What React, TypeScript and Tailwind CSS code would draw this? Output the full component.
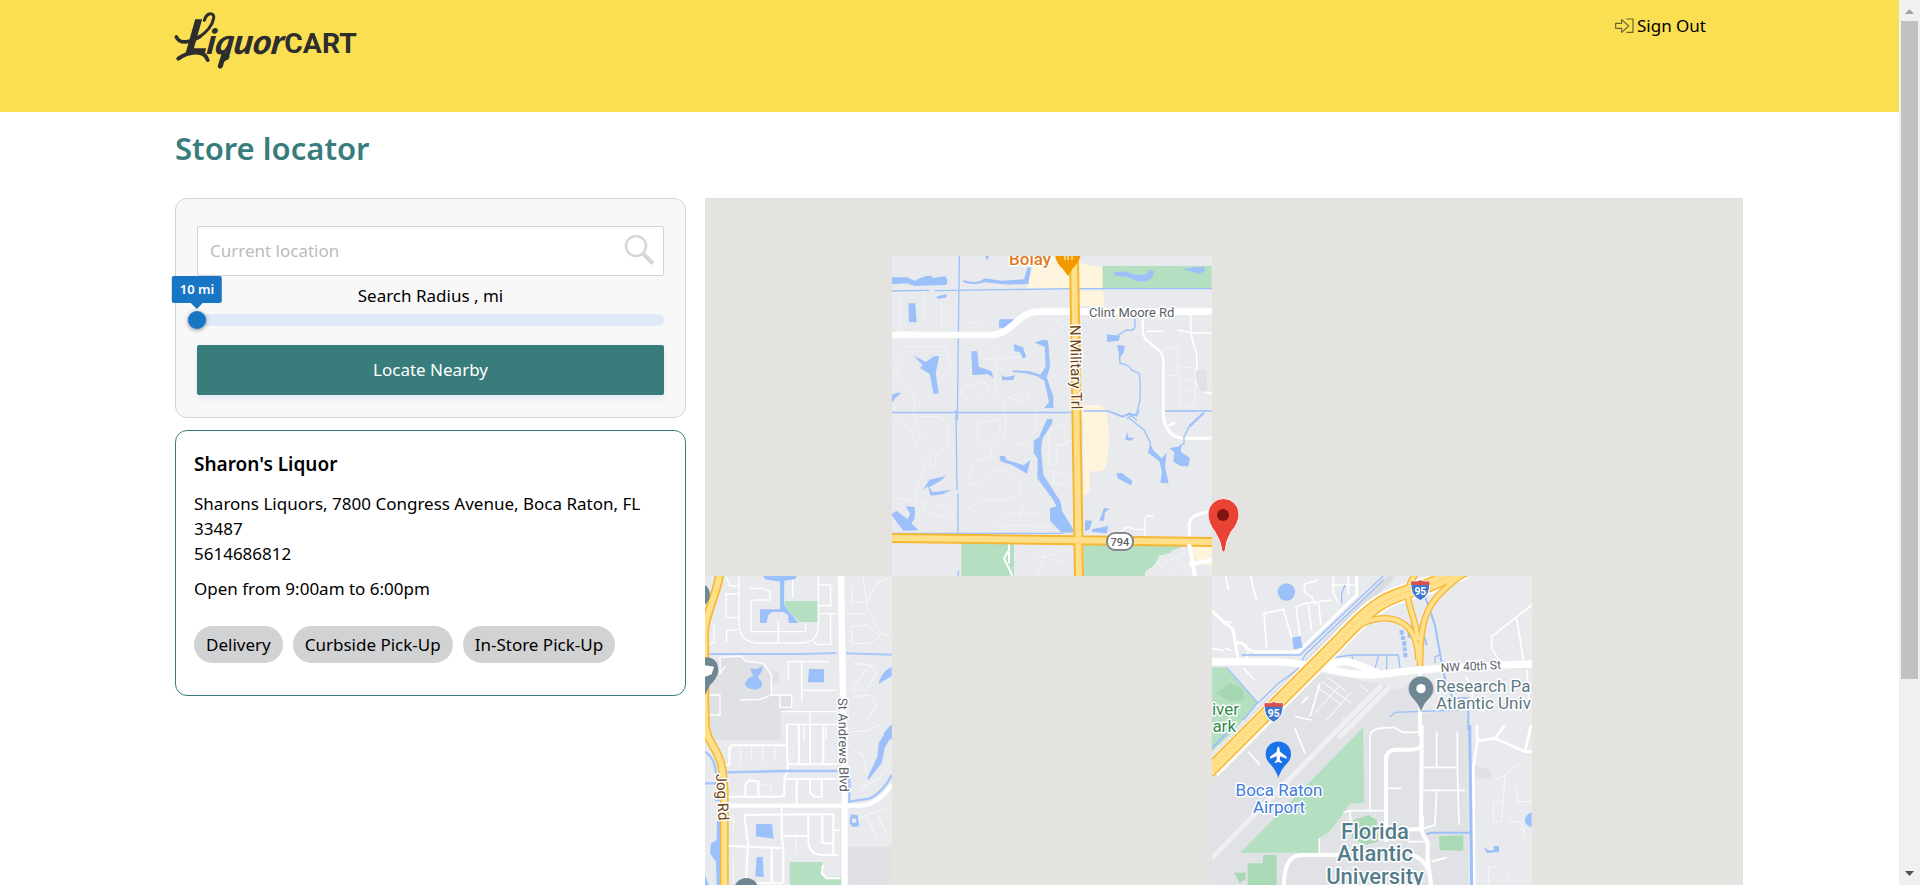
import React from "react";

const services = ["Delivery", "Curbside Pick-Up", "In-Store Pick-Up"];

function Logo() {
  return (
    <svg width="184" height="60" viewBox="0 0 552 180" role="img" aria-label="LiquorCART" className="block overflow-visible">
      <g fill="none" stroke="#2d2d2d" strokeLinecap="round" strokeLinejoin="round">
        <path d="M4 78 C14 100 45 96 76 76" strokeWidth="11" />
        <path d="M10 143 C40 122 88 114 98 147" strokeWidth="12" />
        <path d="M88 28 C96 2 120 4 116 22 C112 44 92 66 70 80" strokeWidth="9" />
        <path d="M147 130 L136 165" strokeWidth="15" />
        <path d="M140 152 Q150 148 160 138" strokeWidth="7" />
      </g>
      <g fill="#2d2d2d" fontFamily="Lato, sans-serif" fontWeight="900" fontStyle="italic">
        <text transform="translate(26 129) skewX(-9)" fontSize="144">L</text>
        <text transform="translate(92 129) skewX(-8)" fontSize="105">iquor</text>
      </g>
      <text x="328" y="127" fontSize="85" fill="#2d2d2d" fontFamily="Roboto, sans-serif" fontWeight="700">CART</text>
    </svg>
  );
}

function SignOutIcon() {
  return (
    <svg width="19" height="16" viewBox="0 0 57 48" fill="none" stroke="#6b6330" strokeWidth="3.4" strokeLinejoin="round" aria-hidden="true">
      <path d="M2 16 H20 V5 L41 24 L20 43 V31 H2 Z" />
      <path d="M34 3 H54 V43 H34" />
    </svg>
  );
}

function Shield({ x, y }: { x: number; y: number }) {
  return (
    <g transform={`translate(${x} ${y})`}>
      <path d="M-27 -30 Q-13 -26 0 -32 Q13 -26 27 -30 Q34 12 0 29 Q-34 12 -27 -30Z" fill="#3f77d0" stroke="#fff" strokeWidth="3" />
      <path d="M-27 -30 Q-13 -26 0 -32 Q13 -26 27 -30 L28 -18 H-28Z" fill="#d9504f" />
      <text y="13" textAnchor="middle" fontSize="31" fontWeight="700" fill="#fff">95</text>
    </g>
  );
}

function NorthTile() {
  return (
    <g clipPath="url(#tile-north)">
      <rect x="892" y="256" width="320" height="320" fill="#e8eaed" />
      <g transform="translate(890 250) scale(.33333)">
        <path d="M430 45 L470 17 H570 V40 L638 52 V116 H410Z M568 122 H636 Q644 130 641 168 H568Z M575 465 H630 Q650 470 652 510 H575Z" fill="#fef5dc" />
        <path d="M638 48 H965 V116 H638Z" fill="#b4dfc1" />
        <g fill="none" stroke="#f1f2f4" strokeWidth="3">
          <path d="M0 128 L104 125 V190 L78 245 M28 130 V245 H80 M155 140 V240 M155 146 H180 M155 170 H180 M155 194 H180 M155 218 H180 M225 242 V228 L238 218 H268 V242 M40 290 H165 L185 345 L140 400 M50 290 L10 360 L45 400 Q85 430 72 510 M0 370 L40 345 M310 290 L320 365 L312 410 L345 470 V510 M220 410 L285 395 L298 425 L235 455 L210 425Z M350 445 L410 420 L412 455 Z M440 235 L465 215 M480 225 L495 250 M500 215 L520 230 L515 250 M460 60 L490 85 H512 M492 85 V112 M500 60 L520 95 M280 330 L390 320 L430 335 M505 377 h15" />
          <path d="M820 310 V292 H862 V377 H820 M868 352 H915 V470 H870Z M870 388 H915 M915 410 L872 432 M915 410 L952 432" />
        </g>
        <g fill="none" stroke="#fff" strokeWidth="7">
          <path d="M762 194 Q750 255 772 272 L805 300 Q823 315 820 345 V510" />
          <path d="M902 190 Q900 270 920 310 V385 Q915 420 965 430 M770 244 H820 M862 240 L910 249 H965" strokeWidth="5" />
        </g>
        <path d="M918 360 H950 V425 H935 Q915 405 918 360Z" fill="#dfe1e4" />
        <g fill="none" stroke="#9cc0fa" strokeWidth="4">
          <path d="M208 17 L202 510 M0 123 L118 121 M135 122 L545 116 H965 M0 487 H555 M580 483 H655 L693 500 L720 493 L740 510 M735 205 V230 Q730 245 710 240 L680 258 M688 315 L690 340 Q720 345 725 360 L747 370 Q752 390 750 450 L740 490 L710 505 M965 483 H820 M943 488 L900 530" />
        </g>
        <g fill="#9cc0fa">
          <path d="M0 82 H50 L75 92 Q120 68 130 84 L165 79 Q178 88 168 105 L75 108 L50 100 L0 103Z M220 90 Q260 104 285 85 L335 92 L402 88 L412 54 L423 51 L415 101 Q360 106 325 101 L285 97 Q245 108 220 96Z M285 17 h12 l-6 15z M138 140 L170 132 L168 143 L145 146Z M55 160 H76 L80 217 H57Z M328 208 H378 L342 235 L326 232Z" />
          <path d="M70 316 L107 336 L132 319 L148 318 L137 370 L146 430 L131 432 L119 372 L90 354 L98 346Z M244 304 H262 L266 350 L304 363 L310 383 L294 373 L247 375Z M335 374 L345 382 L375 376 L370 390 L337 391Z M371 282 L399 292 L409 322 L398 325 L390 306 L374 304Z M434 278 Q475 260 475 280 L480 350 L470 382 L490 440 L490 474 L462 475 L477 456 L463 392 L440 378 L408 370 L368 366 L369 361 L415 363 L451 374 L467 350 L464 290Z M0 438 Q20 424 34 430 L17 443 L6 458Z" />
          <path d="M672 67 L704 64 L730 73 L765 75 L779 60 L793 64 L786 84 L764 95 L738 92 L711 80 L676 77Z M875 56 L943 50 V65 L926 71Z M650 253 L690 257 L686 272 L652 276Z M681 285 L704 287 L702 307 L689 323Z" />
        </g>
        <path d="M0 255 H300 C370 255 380 185 445 185 H965" fill="none" stroke="#fff" strokeWidth="20" />
      </g>
      <g transform="translate(890 410) scale(.33333)">
        <path d="M580 10 H645 Q660 40 656 95 Q656 182 630 184 H600 V235 Q595 255 580 255Z M905 407 H965 V470 L905 440Z" fill="#fef5dc" />
        <path d="M214 397 H372 V500 H214Z M582 404 H890 L850 420 L830 435 H808 L795 465 L765 485 V500 H582Z" fill="#b4dfc1" />
        <g fill="none" stroke="#f1f2f4" strokeWidth="3">
          <path d="M10 15 L60 60 L80 110 L110 155 L85 215 L75 300 M70 10 L85 65 L138 128 L175 112 L172 40 L150 20 L90 20 M120 130 v45 M140 130 L135 170 L105 175 M0 265 L75 270 L110 280 L100 305 L190 325 L185 290 L115 280 M265 35 L330 30 V70 L290 110 H262Z M350 10 L340 85 L310 105 L300 145 L255 150 L230 215 L270 230 L330 175 Q400 200 390 250 L350 270 L280 270 L220 305 M330 175 L280 200 M300 350 L355 310 H440 L475 352 L410 345 Z M400 285 L385 345 M475 65 L520 40 L530 105 H500 V165 H475 Z M550 90 L500 110 M470 180 L530 195 L555 240 M490 170 V220 L525 225 M440 0 V55 L410 100 H370 M445 495 L470 410 M430 430 L520 460 L545 480 M455 445 L545 415" />
          <path d="M770 490 L830 430 L900 495 M800 460 L850 495 M850 430 L910 500 M820 460 L885 430" />
        </g>
        <g fill="none" stroke="#fff" strokeWidth="9">
          <path d="M820 0 Q820 80 880 85 H965 M835 48 L855 38 M898 385 V345 Q898 310 965 305" />
          <path d="M765 380 V325 Q770 315 790 318 M695 365 Q705 345 735 358 H765" strokeWidth="4" />
        </g>
        <g fill="none" stroke="#9cc0fa" strokeWidth="4">
          <path d="M0 8 H545 M198 0 L201 240 M204 250 V372 M0 370 H520 M205 482 v20 M660 5 L700 20 L718 10 L740 18 L748 0 M718 25 L762 60 L782 100 M940 8 L900 45 L882 80 V100 L855 120" />
        </g>
        <g fill="#9cc0fa">
          <path d="M470 28 L488 26 L485 43 L458 85 L453 120 L460 195 L512 275 L516 303 L549 356 L549 367 L515 368 L480 332 V295 L499 289 L490 270 L442 205 L443 145 L431 130 V92 L448 80Z M328 137 L344 138 L350 150 L402 166 L421 150 L411 191 L365 164 L332 154Z M99 240 L118 209 L168 198 L150 214 L117 232 L128 247 L185 239 L157 253 L122 257 L114 229Z M3 313 L19 302 L53 328 L60 311 L48 289 L75 291 L74 325 L64 340 L85 361 L40 362Z" />
          <path d="M680 190 L696 189 L727 213 L724 226 L710 220 L683 205Z M711 65 L716 84 L732 82 L725 92 L706 90Z M780 98 L790 121 L815 145 L830 128 L825 170 L836 220 L811 218 L816 186 L808 154 L774 128Z M838 115 L875 107 L872 125 L900 144 L895 169 L873 169 L850 155 L853 126Z M585 331 L607 332 L599 358 L585 364Z M606 358 L655 348 L650 370 L606 366Z M628 332 L642 294 L660 296 L645 307 L642 332Z" />
        </g>
        <path d="M357 397 V420 L342 445 L350 461 L367 497 M357 425 V460" fill="none" stroke="#fff" strokeWidth="6" />
      </g>
      <g fill="none" strokeLinejoin="round">
        <path d="M892 538 L1212 542 M1074 256 L1079 578" stroke="#f7b733" strokeWidth="10" />
        <path d="M892 538 L1212 542 M1074 256 L1079 578" stroke="#fee08b" strokeWidth="6" />
        <path d="M1189 544 L1195 576 M1191 564 L1212 560" stroke="#fff" strokeWidth="4" />
      </g>
      <circle cx="1192" cy="564" r="3" fill="#fff" />
      <g fontFamily="Roboto, sans-serif" paintOrder="stroke" stroke="#fff" strokeLinejoin="round">
        <text x="1009" y="265" fontSize="17" fontWeight="500" fill="#df7b1c" strokeWidth="3">Bolay</text>
        <text x="1089" y="317" fontSize="13" fill="#5b5f65" strokeWidth="3">Clint Moore Rd</text>
        <text transform="translate(1070 325) rotate(89)" fontSize="15" fill="#704413" strokeWidth="3">N Military Trl</text>
      </g>
      <path d="M1055 254 H1081 Q1079 263 1073 268 L1068 276 L1062 268 Q1056 263 1055 254Z" fill="#f29900" />
      <path d="M1065 254 V260 M1068 254 V260 M1072 254 V260" stroke="#fff" strokeWidth="1" fill="none" />
      <rect x="1107" y="533" width="26" height="17" rx="8" fill="#fff" stroke="#85888c" strokeWidth="2" />
      <text x="1120" y="546" textAnchor="middle" fontFamily="Roboto, sans-serif" fontSize="11" fontWeight="500" fill="#5b5f65">794</text>
    </g>
  );
}

function WestTile() {
  return (
    <g clipPath="url(#tile-west)">
      <rect x="705" y="576" width="187" height="320" fill="#e8eaed" />
      <g transform="translate(700 570) scale(.33333)">
        <path d="M60 262 L120 258 L140 275 L190 280 L214 315 V375 H275 V420 L242 425 V510 H15 V350Z M218 300 L238 308 V340 H218Z" fill="#dfe1e4" />
        <path d="M255 93 H353 V156 H297 L252 105Z" fill="#b4dfc1" />
        <g fill="none" stroke="#fff" strokeWidth="4">
          <path d="M117 17 V165 Q120 215 170 219 H310 Q355 215 355 165 V20 M78 20 L90 48 H115 M78 143 V72 H115 M78 143 H120 M153 185 V95 L165 90 H210 V65 L190 55 H150 M153 185 H317 V158 M235 155 V219 M278 20 V85 M355 45 H392 V107 H355 M355 131 H412 M340 214 L350 223 H392 V132 M80 215 V182 L115 178 M42 160 V220 H15 M62 262 L120 258 L140 275 L190 280 L214 315 V375 M60 262 V310 L75 290 M122 390 L180 388 L214 375 H275 V412 H240 V375 M272 425 H412 M330 425 V510 M262 510 V463 H412 M295 465 V510 M312 465 V510 M378 465 V510 M15 375 H60 V435 H22 V375 M242 425 H275 M390 275 H305 V395 M305 361 H412 M265 330 V275 H305" />
          <path d="M455 100 V50 L485 20 M458 95 L500 100 L490 20 M500 100 L530 40 L560 25 M500 110 L540 190 L570 200 M455 220 V170 L500 165 L540 200 L510 220Z M460 280 L510 285 L460 350 M510 285 L530 310 L500 360 H455 M460 380 L510 375 L530 410 L500 450 M410 131 H500" strokeWidth="2" />
        </g>
        <g fill="#9cc0fa">
          <path d="M189 17 H290 L285 28 L253 32 L252 105 L295 159 H266 L264 135 L250 126 H215 L204 137 L200 159 H180 V118 H240 V35 L195 28Z M150 296 L174 297 L188 286 L186 303 L173 322 Q200 348 172 358 Q138 360 135 342 Q140 322 160 319Z M327 297 H372 V337 H324Z M537 335 Q550 300 575 291 V318 L537 341Z M550 490 L575 463 V510Z" />
        </g>
        <path d="M15 252 H300 L410 249 M438 250 L575 254" fill="none" stroke="#a9c7f7" strokeWidth="6" />
        <path d="M61 0 C50 90 5 140 14 220 V400 L18 510" fill="none" stroke="#f7b733" strokeWidth="27" />
        <path d="M61 0 C50 90 5 140 14 220 V400 L18 510" fill="none" stroke="#fee08b" strokeWidth="17" />
        <path d="M423 17 L431 510" stroke="#fff" strokeWidth="19" />
        <path d="M10 42 A36 36 0 0 1 10 106 M15 262 Q55 260 55 305 Q48 330 30 345 L15 375Z" fill="#6f8792" />
        <path d="M15 286 L42 290 L35 313 L15 320" fill="#fff" />
      </g>
      <g transform="translate(700 725) scale(.33333)">
        <path d="M15 0 H242 V40 L75 45 L15 35Z M445 365 H575 V480 H445Z" fill="#dfe1e4" />
        <path d="M269 411 H368 V455 H424 V490 H269Z" fill="#b4dfc1" />
        <g fill="none" stroke="#fff" strokeWidth="6">
          <path d="M68 120 H88 V70 L95 61 H261 V0 M265 118 H412 M297 0 V116 M330 0 V116 M370 0 V116 M261 61 L263 140 L253 158 V212 L240 215 H80 M136 215 V178 L148 165 L175 170 V215 M255 162 H412 M290 162 V235 M330 162 V205 L345 215 H365 V162 M133 270 L350 268 H400 V388 M133 270 L144 360 L138 465 M245 245 V333 L250 370 V472 M80 362 L250 370 M215 370 V475 M138 475 H250 M250 333 H325 V268 M325 333 V350 Q330 392 370 390 H415 M367 270 V355 H402 M402 316 H420 M369 420 L365 445 L380 460 H422" />
          <path d="M100 270 V320 M288 335 V387 M100 400 V475 M122 65 V115 M155 65 V110 M188 65 V115 M225 65 V110 M180 180 H213 V210 M460 20 L500 18 L540 0 M460 75 L490 90 L500 150 M480 190 L540 160 L570 120 M470 285 L500 270 L560 250 M500 275 L530 340 M530 260 L560 330" strokeWidth="2" />
        </g>
        <g fill="#9cc0fa">
          <path d="M168 297 H216 L221 341 L168 334Z M170 397 L188 395 L191 456 L166 454Z M51 288 H60 V480 H50 L48 410 L30 385 L33 355 L50 345Z M560 15 L575 0 V35 L555 65 L545 115 L505 165 L502 160 L532 95 L536 55Z M452 268 L473 271 L478 304 L459 306 L448 295Z M15 450 L27 480 H15Z" />
        </g>
        <path d="M15 80 Q45 100 48 145 M15 175 H60 M45 225 H60 M77 142 L255 138 H412 M448 158 V230 L510 220 Q550 200 575 150" fill="none" stroke="#a5c5f8" strokeWidth="7" />
        <path d="M80 242 H470 Q530 245 575 180" fill="none" stroke="#fff" strokeWidth="13" />
        <path d="M434 0 V480" stroke="#fff" strokeWidth="18" />
        <path d="M15 0 L25 38 C65 105 68 115 73 200 V485" fill="none" stroke="#f7b733" strokeWidth="26" />
        <path d="M15 0 L25 38 C65 105 68 115 73 200 V485" fill="none" stroke="#fee08b" strokeWidth="17" />
        <circle cx="139" cy="496" r="37" fill="#6f8792" />
        <circle cx="462" cy="287" r="7" fill="#e8eaed" />
      </g>
      <g fontFamily="Roboto, sans-serif" paintOrder="stroke" stroke="#fff" strokeWidth="3" strokeLinejoin="round">
        <text transform="translate(838 698) rotate(89)" fontSize="13" fill="#5b6268">St Andrews Blvd</text>
        <text transform="translate(716 774) rotate(87)" fontSize="15" fill="#704413">Jog Rd</text>
      </g>
    </g>
  );
}

function EastTile() {
  return (
    <g clipPath="url(#tile-east)">
      <rect x="1212" y="576" width="320" height="320" fill="#e8eaed" />
      <g transform="translate(1205 570) scale(.33333)">
        <path d="M345 310 L520 340 L580 360 L650 320 V430 L790 420 V950 H20 V620Z" fill="#e0e2e6" />
        <path d="M20 292 H62 L158 400 L80 490 L20 545Z" fill="#b4dfc1" />
        <path d="M30 370 L75 340 L110 355 L120 390 L75 395Z" fill="#a5d8b2" />
        <path d="M560 17 L20 575" stroke="#dadce0" strokeWidth="22" />
        <g fill="none" stroke="#fff" strokeWidth="5">
          <path d="M137 17 Q145 60 155 90 M62 17 L70 60 M340 30 L300 42 Q290 70 320 80 L332 105 M185 235 L177 130 L235 118 L265 220 M290 235 L273 110 L300 100 L380 90 M320 180 L310 105 M348 165 L340 95 M380 45 H455 M430 17 V75 M385 17 V70 L400 100 M20 235 L55 242 M60 235 L80 242 M115 295 L150 330 M130 240 L125 285 M20 120 L55 155 L80 158 M860 235 V200 L980 105 M935 145 L955 270 M860 235 L885 275 M780 320 Q810 350 800 400 M965 300 L975 410 M290 400 L310 380 M315 440 L345 340 M270 440 L320 450" />
          <path d="M20 122 L60 160 Q88 170 88 205 L99 265 M90 218 Q118 215 125 235 L150 246 H280 L455 75 V17" strokeWidth="9" />
          <path d="M365 320 L425 365 M350 335 L440 400 M335 350 L410 405 M405 345 L330 430 M440 365 L365 450 M465 345 L490 365 M410 440 L450 475" strokeWidth="3" />
        </g>
        <g fill="none" stroke="#9cc0fa" strokeWidth="4">
          <path d="M110 255 H285 L535 17 M290 275 L300 255 L535 30 M65 292 L158 398 M158 398 L115 450 M160 398 L220 340 L290 290 M385 263 L440 255 H580 L585 295 M440 255 L448 285 M520 258 L510 295 M545 258 V298 M410 100 V70 L420 45 M690 280 V260 L705 255 M555 440 L570 427 L765 420" />
          <path d="M660 80 L690 165 L710 280 L725 350 M645 160 L665 225 M725 350 L745 385 H790 V480" strokeWidth="6" />
        </g>
        <g fill="#9cc0fa"><circle cx="244" cy="66" r="26" /><path d="M261 203 L287 198 L292 233 L266 238Z M584 180h12v14h-12z M588 198h12v12h-12z M592 214h12v14h-12z M593 232h12v12h-12z M595 248h12v14h-12z M608 165 h18 v38 h-18z" /></g>
        <path d="M20 275 H210 C340 280 400 315 495 315 C570 312 580 295 980 282 M365 290 C430 255 460 290 520 308" fill="none" stroke="#fff" strokeWidth="22" />
        <path d="M645 290 V500" stroke="#fff" strokeWidth="11" />
        <path d="M530 345 L20 865 M555 350 L400 505" stroke="#eff0f2" strokeWidth="15" />
        <g fill="none" strokeLinecap="butt">
          <path d="M780 0 L660 50 C530 85 510 100 400 215 L20 600" stroke="#fff" strokeWidth="54" />
          <path d="M645 288 C646 120 670 90 790 0 M400 210 C500 115 640 115 640 270 M640 210 C620 90 580 80 640 0" stroke="#f7b733" strokeWidth="20" />
          <path d="M780 0 L660 50 C530 85 510 100 400 215 L10 605" stroke="#f7b733" strokeWidth="43" />
          <path d="M645 288 C646 120 670 90 790 0 M400 210 C500 115 640 115 640 270 M640 210 C620 90 580 80 640 0" stroke="#fee08b" strokeWidth="12" />
          <path d="M780 0 L660 50 C530 85 510 100 400 215 L10 605" stroke="#fee08b" strokeWidth="34" />
          <path d="M780 0 L660 50 C530 85 510 100 400 215 L10 605" stroke="#f9c95b" strokeWidth="2" />
        </g>
      </g>
      <g transform="translate(1205 725) scale(.33333)">
        <path d="M465 17 L474 5 L478 235 H435 L415 265 L375 318 L343 340 V383 L105 384Z" fill="#b4dfc1" />
        <path d="M174 390 H215 V480 H128 V415 H174Z M87 443 H122 V463 L104 475Z M702 333 L775 331 V377 L704 375Z M445 285 L490 270 L515 285 L520 350 L480 360 L440 340Z" fill="#a9dab5" />
        <path d="M810 120 L858 135 V165 L810 155Z" fill="#dfe1e4" />
        <g fill="none" stroke="#fff" strokeWidth="9">
          <path d="M650 0 V55 Q650 74 615 74 H575 Q543 74 543 105 V350 M650 60 L648 305 Q650 330 668 350 V400 L678 480 M610 313 H648 M415 390 H285 Q237 395 237 480 M620 390 Q675 405 678 480" strokeWidth="12" />
          <path d="M543 257 H495 V35 Q495 15 520 10 L565 7 L595 22 H648 M650 127 H757 M757 20 V127 L762 300 M695 20 V125 M650 196 H780 M655 275 V310 L690 300 L695 195 M435 257 L437 290 M415 263 L435 257 H543 M343 340 V385 M550 190 H590 M130 80 L165 120 M670 350 H610 M680 410 L725 398 M270 10 L300 85" strokeWidth="5" />
          <path d="M815 0 L817 50 L805 130 L808 480 M817 48 L870 40 L960 80 H980 M870 40 L900 0 M960 80 L978 0" strokeWidth="8" />
          <path d="M870 165 L900 150 L950 110 M900 150 L890 290 H865 V230 H890 M930 180 L940 230 H980 M910 290 H950 L960 340 M850 480 V425 H880 M900 460 L920 435" strokeWidth="2" />
        </g>
        <path d="M794 0 L800 480" stroke="#9cc0fa" strokeWidth="9" />
        <path d="M665 327 L680 323 H797 M20 70 L65 25" fill="none" stroke="#9cc0fa" strokeWidth="6" />
        <path d="M980 262 Q960 270 960 288 Q962 302 980 306Z M838 368 L850 376 H866 V363 H882 V381 L845 384Z" fill="#9cc0fa" />
      </g>
      <g transform="translate(1205 570) scale(.33333)" fontFamily="Roboto, sans-serif">
        <Shield x={646} y={63} />
        <Shield x={206} y={428} />
        <path d="M648 426 Q640 400 620 382 A38 38 0 1 1 676 382 Q656 400 648 426Z" fill="#6f8792" stroke="#dfe3e6" strokeWidth="2" />
        <circle cx="648" cy="356" r="14" fill="#fff" />
        <path d="M220 623 Q212 598 193 579 A38 38 0 1 1 247 579 Q228 598 220 623Z" fill="#1a73e8" />
        <path d="M220 529 Q225 533 225 545 L245 560 V566 L225 559 V570 L231 576 V579 L220 576 L209 579 V576 L215 570 V559 L195 566 V560 L215 545 Q215 533 220 529Z" fill="#fff" />
      </g>
      <g fontFamily="Roboto, sans-serif" paintOrder="stroke" stroke="#fff" strokeWidth="3" strokeLinejoin="round">
        <text transform="translate(1441 672) rotate(-3)" fontSize="12" fill="#5b6268">NW 40th St</text>
        <g fontSize="17" fill="#5d7884">
          <text x="1436" y="692">Research Pa</text>
          <text x="1436" y="709">Atlantic Univ</text>
        </g>
        <g fontSize="17" fill="#2e8b4f">
          <text x="1239" y="715" textAnchor="end">iver</text>
          <text x="1236" y="732" textAnchor="end">ark</text>
        </g>
        <g fontSize="17" fill="#3f7bdd" textAnchor="middle">
          <text x="1279" y="796">Boca Raton</text>
          <text x="1279" y="813">Airport</text>
        </g>
        <g fontSize="22" fontWeight="500" fill="#547d8c" textAnchor="middle">
          <text x="1375" y="839">Florida</text>
          <text x="1375" y="861">Atlantic</text>
          <text x="1375" y="884">University</text>
        </g>
      </g>
    </g>
  );
}

function StoreMap() {
  return (
    <section aria-label="Map" className="min-w-0 flex-1 overflow-hidden bg-[#e5e3df]">
      <svg viewBox="705 198 1038 687" preserveAspectRatio="xMidYMin slice" className="block h-full w-full">
        <defs>
          <clipPath id="tile-north"><rect x="892" y="256" width="320" height="320" /></clipPath>
          <clipPath id="tile-west"><rect x="572" y="576" width="320" height="320" /></clipPath>
          <clipPath id="tile-east"><rect x="1212" y="576" width="320" height="320" /></clipPath>
        </defs>
        <NorthTile />
        <WestTile />
        <EastTile />
        <path d="M1222 551 Q1221 541 1215 532 Q1208 523 1208 514 A15 15 0 0 1 1239 514 Q1239 523 1231 532 Q1226 541 1225 551 Q1223 553 1222 551Z" fill="#ea4335" stroke="#f5f3ef" strokeWidth="1" />
        <circle cx="1223" cy="515" r="6" fill="#811411" />
      </svg>
    </section>
  );
}

function SearchPanel() {
  return (
    <form className="rounded-xl border border-[#d3d3d3] bg-[#f8f8f8] px-[21px] pt-[27px] pb-[22px]" onSubmit={(e) => e.preventDefault()}>
      <div className="flex h-[50px] items-center rounded-xs border border-[#d3d3d3] bg-white pr-2 pl-3">
        <input aria-label="Current location" placeholder="Current location" className="min-w-0 flex-1 bg-transparent outline-none placeholder:text-[#bcbcbc]" />
        <svg width="32" height="32" viewBox="0 0 32 32" fill="none" stroke="#d6d6d6" aria-hidden="true">
          <circle cx="13" cy="11" r="10" strokeWidth="2.5" />
          <path d="M19.500 18 L30 28.500" strokeWidth="4" />
        </svg>
      </div>
      <div className="relative pt-[7px]">
        <label htmlFor="radius" className="block text-center leading-[26px]">Search Radius , mi</label>
        <output htmlFor="radius" className="absolute top-0 left-0 -translate-x-1/2 rounded-xs bg-[#1976c5] px-2 text-[13px] leading-[27px] font-semibold whitespace-nowrap text-white">
          10 mi
          <svg width="12" height="6" viewBox="0 0 12 6" className="absolute top-full left-1/2 -translate-x-1/2" aria-hidden="true"><path d="M0 0 H12 L6 6Z" fill="#1976c5" /></svg>
        </output>
        <input
          id="radius"
          type="range"
          min={10}
          max={100}
          defaultValue={10}
          className="mt-[2px] -ml-[9px] block h-[18px] w-[calc(100%+9px)] appearance-none bg-transparent [&::-webkit-slider-runnable-track]:h-3 [&::-webkit-slider-runnable-track]:rounded-full [&::-webkit-slider-runnable-track]:bg-[#deebf7] [&::-webkit-slider-thumb]:-mt-[3px] [&::-webkit-slider-thumb]:size-[18px] [&::-webkit-slider-thumb]:appearance-none [&::-webkit-slider-thumb]:rounded-full [&::-webkit-slider-thumb]:bg-[#1976c5] [&::-webkit-slider-thumb]:shadow-[0_1px_4px_rgba(0,0,0,0.45)]"
        />
      </div>
      <button type="submit" className="mt-4 h-[50px] w-full rounded-xs bg-[#387d7c] text-white shadow-[0_3px_6px_#dfe9f2]">Locate Nearby</button>
    </form>
  );
}

function StoreCard() {
  return (
    <article className="mt-3 rounded-xl border border-[#387d7c] px-[18px] pt-[19px] pb-8 leading-[25px]">
      <h2 className="text-[19px] leading-7 font-semibold">Sharon's Liquor</h2>
      <p className="mt-[13px]">Sharons Liquors, 7800 Congress Avenue, Boca Raton, FL 33487</p>
      <p>5614686812</p>
      <p className="mt-[10px]">Open from 9:00am to 6:00pm</p>
      <ul className="mt-[25px] flex flex-wrap gap-[10px]">
        {services.map((s) => (
          <li key={s} className="rounded-full bg-[#d1d2d4] px-3 leading-[37px]">{s}</li>
        ))}
      </ul>
    </article>
  );
}

export default function App() {
  return (
    <div className="flex h-screen overflow-hidden bg-white font-['Noto_Sans',sans-serif] text-[17px] text-black">
      <div className="flex min-w-0 flex-1 flex-col">
        <header className="flex h-28 shrink-0 items-start justify-between bg-[#fbdf53] pt-[11px] pr-[193px] pl-[175px]">
          <a href="#home"><Logo /></a>
          <a href="#sign-out" className="flex items-center gap-[3px] leading-[30px]"><SignOutIcon />Sign Out</a>
        </header>
        <main className="flex min-h-0 flex-1 flex-col pr-[156px] pl-[175px]">
          <h1 className="pt-4 pb-[30px] text-[31px] leading-10 font-semibold text-[#387d7c]">Store locator</h1>
          <div className="flex min-h-0 flex-1 gap-[19px]">
            <div className="w-[511px] shrink-0">
              <SearchPanel />
              <StoreCard />
            </div>
            <StoreMap />
          </div>
        </main>
      </div>
      <div aria-hidden="true" className="flex w-[21px] shrink-0 flex-col items-center bg-[#f0f0f0]">
        <svg width="21" height="21" viewBox="0 0 21 21"><path d="M6 14 L10.500 9 L15 14Z" fill="#a3a3a3" /></svg>
        <div className="h-[658px] w-[17px] bg-[#c1c1c1]" />
        <svg width="21" height="21" viewBox="0 0 21 21" className="mt-auto"><path d="M6 7 L10.500 12 L15 7Z" fill="#505050" /></svg>
      </div>
    </div>
  );
}
